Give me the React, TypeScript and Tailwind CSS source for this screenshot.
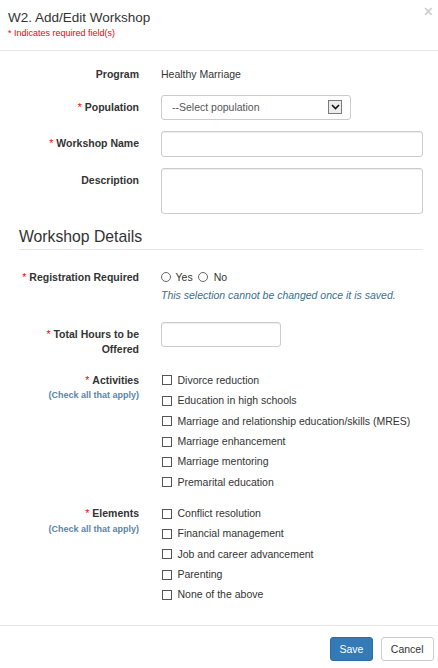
import React from "react";

const activities = [
  "Divorce reduction",
  "Education in high schools",
  "Marriage and relationship education/skills (MRES)",
  "Marriage enhancement",
  "Marriage mentoring",
  "Premarital education",
];

const elements = [
  "Conflict resolution",
  "Financial management",
  "Job and career advancement",
  "Parenting",
  "None of the above",
];

function Req() {
  return <span className="text-[#ff0000] font-normal">* </span>;
}

function Label({ children, className = "" }: { children: React.ReactNode; className?: string }) {
  return (
    <div className={"w-[139px] shrink-0 text-right font-bold text-[#333] " + className}>
      {children}
    </div>
  );
}

function CheckList({ items, rowH }: { items: string[]; rowH: string }) {
  return (
    <div className="ml-[22px] flex flex-col">
      {items.map((item) => (
        <label key={item} className={"flex items-center " + rowH}>
          <span className="ml-[1px] w-[10px] h-[10px] border border-[#555] bg-white shrink-0" />
          <span className="ml-[5.5px] text-[#333]">{item}</span>
        </label>
      ))}
    </div>
  );
}

export default function App() {
  return (
    <div className="w-[438px] h-[668px] overflow-hidden bg-white font-['Liberation_Sans',Arial,sans-serif] text-[10.5px] leading-[15px] text-[#333]">
      {/* header */}
      <div className="flex justify-between pl-[8px] pr-[5px] pt-[8px] pb-[10px] border-b border-[#e5e5e5]">
        <div>
          <h4 className="text-[13.5px] leading-[19px] text-[#333]">W2. Add/Edit Workshop</h4>
          <div className="text-[9px] leading-[13px] text-[#ff0000]">* Indicates required field(s)</div>
        </div>
        <button className="text-[15.75px] leading-none font-bold text-black/20 -mt-[4px] h-fit">×</button>
      </div>

      {/* body */}
      <div className="pr-[15px]">
        <div className="flex mt-[11px] h-[25px] pt-[5px]">
          <Label>Program</Label>
          <div className="ml-[22px]">Healthy Marriage</div>
        </div>

        <div className="flex mt-[7.5px]">
          <Label className="pt-[5px]">
            <Req />Population
          </Label>
          <div className="ml-[22px] w-[190px] h-[25.5px] border border-[#ccc] rounded-[3px] flex items-center pl-[10px] pr-[8px] justify-between">
            <span className="text-[#555]">--Select population</span>
            <span className="w-[14px] h-[14px] border border-[#7a7a7a] bg-[#ececec] flex items-center justify-center">
              <svg width="9" height="6" viewBox="0 0 9 6">
                <path d="M1 1 L4.5 4.5 L8 1" fill="none" stroke="#111" strokeWidth="1.6" />
              </svg>
            </span>
          </div>
        </div>

        <div className="flex mt-[11.25px]">
          <Label className="pt-[5px]">
            <Req />Workshop Name
          </Label>
          <div className="ml-[22px] flex-1 h-[25.5px] border border-[#ccc] rounded-[3px] shadow-[inset_0_1px_1px_rgba(0,0,0,0.075)]" />
        </div>

        <div className="flex mt-[11.25px]">
          <Label className="pt-[5px]">Description</Label>
          <div className="ml-[22px] flex-1 h-[45.5px] border border-[#ccc] rounded-[3px] shadow-[inset_0_1px_1px_rgba(0,0,0,0.075)]" />
        </div>

        {/* fieldset */}
        <div className="ml-[19px] mt-[12.5px] border-b border-[#e5e5e5] text-[15.75px] leading-[22.5px] text-[#333]">
          Workshop Details
        </div>

        <div className="flex mt-[15px]">
          <Label className="pt-[5px]">
            <Req />Registration Required
          </Label>
          <div className="ml-[22px] pt-[5px]">
            <div className="flex items-center h-[15px]">
              <span className="w-[10px] h-[10px] rounded-full border border-[#666] bg-white" />
              <span className="ml-[4.5px]">Yes</span>
              <span className="ml-[5px] w-[10px] h-[10px] rounded-full border border-[#666] bg-white" />
              <span className="ml-[6px]">No</span>
            </div>
            <div className="mt-[3.5px] italic text-[#3a6f91]">
              This selection cannot be changed once it is saved.
            </div>
          </div>
        </div>

        <div className="flex mt-[19px]">
          <Label className="pt-[5px]">
            <Req />Total Hours to be
            <br />
            Offered
          </Label>
          <div className="ml-[22px] w-[120px] h-[25px] border border-[#ccc] rounded-[3px] shadow-[inset_0_1px_1px_rgba(0,0,0,0.075)]" />
        </div>

        <div className="flex mt-[13px]">
          <Label className="pt-[2.5px]">
            <div>
              <Req />Activities
            </div>
            <div className="text-[9px] leading-[13px] mt-[1.5px] text-[#5b84a8]">(Check all that apply)</div>
          </Label>
          <CheckList items={activities} rowH="h-[20.45px]" />
        </div>

        <div className="flex mt-[10.9px]">
          <Label className="pt-[2.5px]">
            <div>
              <Req />Elements
            </div>
            <div className="text-[9px] leading-[13px] mt-[1.5px] text-[#5b84a8]">(Check all that apply)</div>
          </Label>
          <CheckList items={elements} rowH="h-[20.3px]" />
        </div>
      </div>

      {/* footer */}
      <div className="mt-[19.5px] border-t border-[#e5e5e5] pt-[11.25px] pr-[4.5px] flex justify-end gap-[8px]">
        <button className="h-[24.5px] px-[8.5px] bg-[#337ab7] border border-[#2e6da4] rounded-[3px] text-white">
          Save
        </button>
        <button className="h-[24.5px] px-[9px] bg-white border border-[#ccc] rounded-[3px] text-[#333]">
          Cancel
        </button>
      </div>
    </div>
  );
}
